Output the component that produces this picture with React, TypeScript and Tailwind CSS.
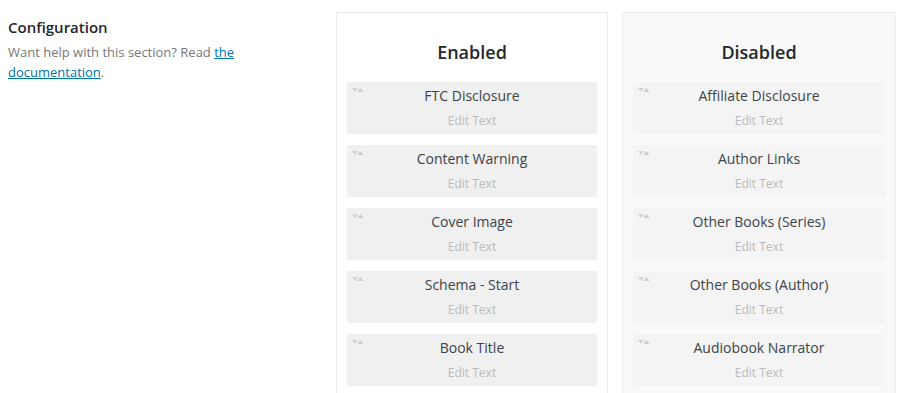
import { type FC } from 'react';

const enabled = ['FTC Disclosure', 'Content Warning', 'Cover Image', 'Schema - Start', 'Book Title'];
const disabled = ['Affiliate Disclosure', 'Author Links', 'Other Books (Series)', 'Other Books (Author)', 'Audiobook Narrator'];

const Item: FC<{ label: string; muted?: boolean }> = ({ label, muted }) => (
  <div className={`relative h-[52px] pt-[4px] text-center ${muted ? 'bg-[#f4f4f4]' : 'bg-[#f0f0f0]'}`}>
    {/* drag handle */}
    <svg className="absolute left-[5px] top-[5px]" width="12" height="6" viewBox="0 0 12 6">
      <path d="M0 1h6l-3 4z" fill="#d4d4d4" />
      <path d="M5.5 5h6l-3-4z" fill="#cccccc" />
    </svg>
    <div className="text-[14px] leading-5 text-[#3c434a]">{label}</div>
    <div className="mt-[6px] text-[12px] leading-[18px] text-[#bbbbbb]">Edit Text</div>
  </div>
);

const Column: FC<{ title: string; items: string[]; muted?: boolean }> = ({ title, items, muted }) => (
  <div
    className={`border border-[#ececec] px-[10px] pb-[30px] pt-[27px] ${muted ? 'w-[274px] bg-[#f9f9f9]' : 'w-[272px] bg-white'}`}
  >
    <h3 className="mb-[18px] text-center text-[18px] font-semibold leading-6 text-[#23282d]">{title}</h3>
    <div className="flex flex-col gap-[11px]">
      {items.map((label) => (
        <Item key={label} label={label} muted={muted} />
      ))}
    </div>
  </div>
);

export default function App() {
  return (
    <div className="flex h-[393px] overflow-hidden bg-white font-['Open_Sans',sans-serif]">
      {/* Section intro */}
      <div className="w-[336px] shrink-0 pl-[8px] pt-[17px]">
        <h2 className="text-[15px] font-semibold leading-5 text-[#23282d]">Configuration</h2>
        <p className="mt-[5px] w-[250px] text-[13px] leading-5 text-[#777777]">
          Want help with this section? Read{' '}
          <a href="#" className="text-[#0073aa] underline">
            the documentation
          </a>
          .
        </p>
      </div>

      {/* Sortable lists */}
      <div className="flex items-start gap-[14px] pt-[12px]">
        <Column title="Enabled" items={enabled} />
        <Column title="Disabled" items={disabled} muted />
      </div>
    </div>
  );
}
